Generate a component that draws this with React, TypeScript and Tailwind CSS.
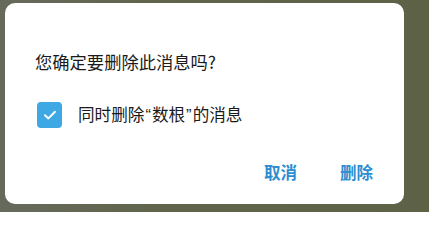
import React from "react";

export default function App() {
  return (
    <div
      className="w-[429px] h-[212px] pt-[3px] pl-[5px] bg-[linear-gradient(90deg,#666a5c_0%,#5f644a_40%,#5d6247_100%)] overflow-hidden"
      style={{ fontFamily: '"Noto Sans CJK SC", "Noto Sans", sans-serif' }}
    >
      <div className="w-[399px] h-[201px] rounded-[10px] bg-white flex flex-col">
        <div className="pt-[47px] pl-[30px] text-[17.3px] leading-[24px] text-[#1a1a1a]">
          您确定要删除此消息吗?
        </div>
        <div className="mt-[28px] pl-[32px] flex items-center h-[26px]">
          <div className="w-[25px] h-[26px] rounded-[4px] bg-[#3ea8e5] flex items-center justify-center">
            <svg width="16" height="16" viewBox="0 0 16 16" fill="none">
              <path d="M3 8.2 L6.4 11.4 L13 4.8" stroke="white" strokeWidth="2" strokeLinecap="round" strokeLinejoin="round" />
            </svg>
          </div>
          <span className="ml-[16px] text-[16.6px] leading-[24px] text-[#1a1a1a]">
            同时删除<span className="font-['Liberation_Sans',sans-serif] px-[1px]">“</span>数根<span className="font-['Liberation_Sans',sans-serif] px-[1px]">”</span>的消息
          </span>
        </div>
        <div className="mt-[32px] flex justify-end pr-[31px] gap-[43px] text-[16.5px] leading-[24px] font-bold text-[#2d8dd0]">
          <span>取消</span>
          <span>删除</span>
        </div>
      </div>
    </div>
  );
}
